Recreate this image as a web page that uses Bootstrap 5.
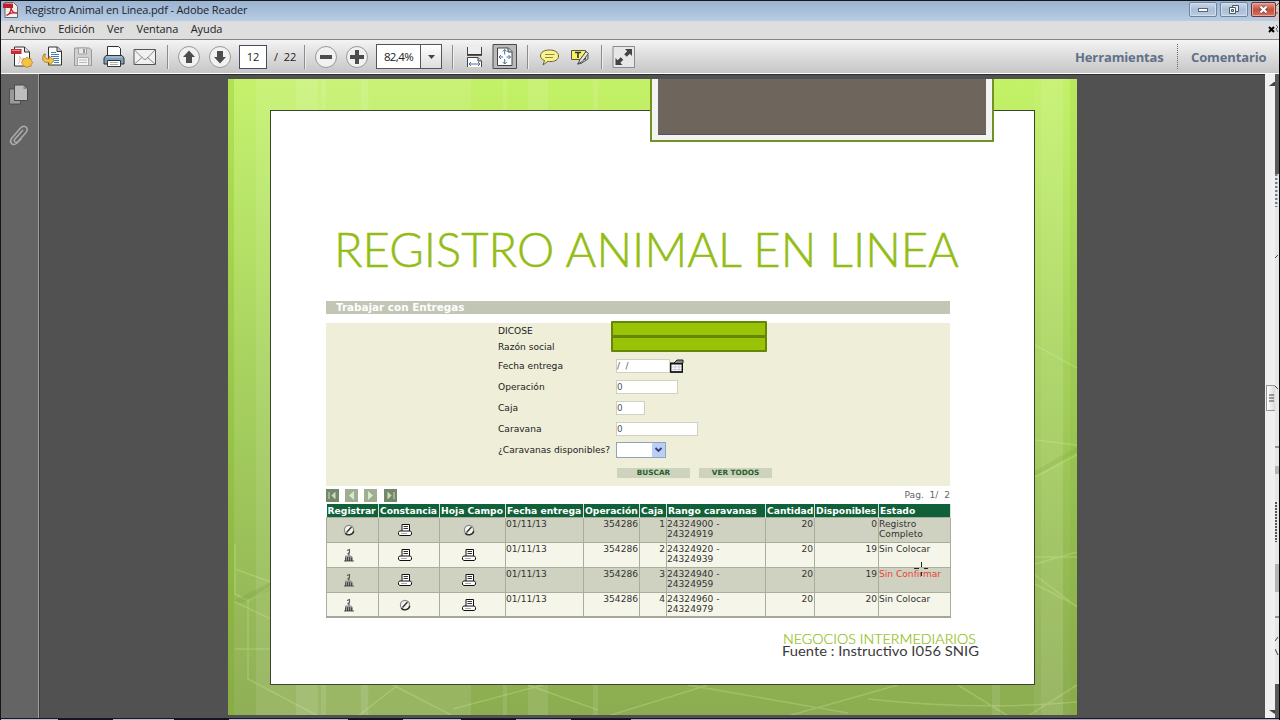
<!DOCTYPE html>
<html lang="es">
<head>
  <meta charset="UTF-8">
  <title>Registro Animal en Linea.pdf - Adobe Reader</title>
  <link href="https://cdn.jsdelivr.net/npm/bootstrap@5.3.0/dist/css/bootstrap.min.css" rel="stylesheet">
  <style>
    body { width: 1280px; height: 720px; overflow: hidden; background: #000; font-family: "Open Sans", "Noto Sans", sans-serif; color: #222; }
    svg { display: block; flex: none; }
    .app-window { width: 1279px; height: 720px; padding-left: 1px; background: #14161c; }

    .title-bar { height: 20px; margin-top: 1px; padding-left: 2px; background: linear-gradient(#9bb4cf, #a9c0da 50%, #b9cde5); font-size: 11px; line-height: 18px; color: #1a2330; }
    .title-bar .doc-name { margin-left: 6px; letter-spacing: -.14px; }
    .win-btn { width: 28px; height: 15px; margin-right: 3px; margin-top: 1px; border: 1px solid #70859d; border-radius: 2px; background: linear-gradient(#cbd9e9, #a9bfd8 50%, #b9cde3); box-shadow: inset 0 0 0 1px #d0deed; }
    .win-close { width: 25px; margin-right: 0; border-color: #6b3434; background: linear-gradient(#dd9d92, #c6503c 50%, #d2705c); box-shadow: inset 0 0 0 1px #e2aaa0; }

    .menu-strip { height: 19px; background: #dedede; border-bottom: 1px solid #858585; padding-left: 7px; font-size: 11px; line-height: 16px; letter-spacing: -.08px; }
    .menu-strip span { margin-right: 12.4px; }
    .tool-strip { height: 34px; padding: 1px 0 0 9px; background: linear-gradient(#f4f4f4, #dcdcdc 50%, #c6c6c6); border-bottom: 1px solid #fff; }
    .tool-sep { width: 2px; height: 24px; border-left: 1px solid #8c8c8c; background: #eee; flex: none; }
    .page-box { width: 28px; height: 24px; border: 1px solid #444d66; background: #fff; font-size: 11px; flex: none; }
    .page-total { font-size: 11px; margin-left: 7px; width: 30px; white-space: pre; }
    .zoom-box { width: 66px; height: 25px; border: 1px solid #555; background: #fff; font-size: 11.5px; letter-spacing: -.6px; flex: none; }
    .zoom-box .drop { width: 21px; border-left: 1px solid #555; background: linear-gradient(#fff, #dedede); }
    .pane-link { font-size: 13px; font-weight: 700; color: #5f7188; letter-spacing: -.13px; line-height: 20px; }

    .side-rail { width: 39px; background: #646464; border-right: 1px solid #3b3b3b; box-shadow: inset -1px 0 #a0a0a0; padding: 10px 0 0 7px; flex: none; }
    .doc-area { width: 1225px; background: #515151; border-top: 1px solid #2d2d2d; padding: 4px 0 0 188px; flex: none; }
    .scroll-rail { width: 10px; background: #f0f0f0; flex: none; }
    .scroll-thumb { width: 9px; height: 26px; border: 1px solid #999; border-right: 0; background: linear-gradient(90deg, #fff, #d8d8d8); }
    .bottom-line { height: 2px; background: linear-gradient(90deg, #b9bbc8 57px, #14161c 57px 112px, #b9bbc8 112px 173px, #14161c 173px 228px, #b9bbc8 228px 347px, #14161c 347px 402px, #b9bbc8 402px 460px, #14161c 460px 515px, #aab 515px 570px, #14161c 570px 630px, #aab 630px 1274px); border-top: 1px solid #17172c; }

    .slide { width: 849px; height: 636px; padding: 31px 42px; }
    .slide-paper { position: relative; width: 765px; height: 575px; background: #fff; border: 1px solid #39452c; padding: 105px 0 0 55px; }
    .slide-tab { position: absolute; top: 0; left: 422px; width: 344px; height: 63px; border: 2px solid #739124; border-top: 0; background: #f3f3f1; padding: 0 6px 5px; }
    .slide-tab div { height: 100%; background: #6e665c; border-bottom: 1px solid #555; }

    .snig { width: 624px; font-family: "DejaVu Sans", sans-serif; font-size: 9.1px; color: #333; }
    .snig-head { height: 13px; margin-top: 17px; background: #c1c6b5; color: #fff; font-weight: 700; font-size: 10.4px; line-height: 13px; padding-left: 10px; }
    .snig-form { position: relative; height: 163px; margin-top: 9px; background: #eeeed9; padding-left: 172px; }
    .form-line { display: flex; align-items: center; height: 21px; }
    .form-line label { width: 118px; white-space: nowrap; color: #222; font-size: 9.1px; }
    .snig-input { height: 14px; border: 1px solid #cfcfc3; background: #fff; color: #555; font-size: 8.8px; line-height: 12px; }
    .snig-select { width: 50px; height: 16px; border: 1px solid #8fa4b6; background: #fff; }
    .snig-btn { width: 73px; height: 10px; background: #cdd3bd; color: #285f2c; font-weight: 700; font-size: 7.3px; line-height: 10px; text-align: center; }
    .redact { position: absolute; left: 285px; width: 156px; height: 16px; background: #98c307; border: 2px solid #668608; border-radius: 1px; }
    .pager { height: 18px; padding-top: 3px; }
    .pager svg { margin-right: 6px; }

    .snig-table { width: 624px; table-layout: fixed; border-collapse: collapse; border-bottom: 2px solid #a5a898; line-height: 10px; }
    .snig-table th { height: 13px; padding: 1px 0 0 1px; background: #10603a; color: #fff; font-size: 9.2px; line-height: 12px; white-space: nowrap; border-right: 1px solid #d9e2d4; }
    .snig-table td { height: 25px; padding: 1px 1px 0 0; vertical-align: top; border: 1px solid #a9ad9b; border-width: 1px 1px 0; }
    .snig-table tbody tr:nth-child(odd) { background: #cfd2c1; }
    .snig-table tbody tr:nth-child(even) { background: #f5f6e9; }
    .snig-table td.icon { padding: 5px 8px 0 0; }
    .snig-table td.icon svg { margin: 0 auto; }
    .snig-table td.num { text-align: right; }
    .snig-table td.warn { color: #e8423a; }
    .slide-foot { margin: 12px 0 0 455px; }
    .cursor { position: absolute; left: 643px; top: 451px; }
  </style>
</head>
<body>
  <!-- shared icons -->
  <svg width="0" height="0" class="position-absolute">
    <symbol id="ico-none" viewBox="0 0 14 14">
      <circle cx="7" cy="7" r="4.6" fill="#f4f4ee" stroke="#888" stroke-width="1.2"/>
      <path d="M3.2 10.2A5 5 0 0 0 11.8 8M4.500 9.500 9.500 4" fill="none" stroke="#2b2b2b" stroke-width="1.3"/>
    </symbol>
    <symbol id="ico-print" viewBox="0 0 16 14">
      <path d="M5 8V1.5h7.5V8" fill="#fff" stroke="#111"/>
      <path d="M6.5 3.5h4.5M6.5 5.5h4.5" stroke="#333"/>
      <path d="M2.5 8h11l1 1.5v2l-1.5 1H3l-1.5-1v-2z" fill="#fff" stroke="#111"/>
      <path d="M4 10.5h6" stroke="#aaa"/>
    </symbol>
    <symbol id="ico-reg" viewBox="0 0 12 14">
      <path d="M4 2.5 6.5 1.5v3L4.500 6M6 5v3" fill="none" stroke="#555" stroke-width="1.1"/>
      <path d="M2 7.500h6l2 2V13H2z" fill="#999"/>
      <path d="M2.500 13V9.500M4.500 13V9M6.500 13V9M8.500 13V9.500M1 13h10" stroke="#333" stroke-width=".8"/>
    </symbol>
  </svg>

  <div class="app-window d-flex flex-column">
    <div class="title-bar d-flex">
      <svg width="16" height="18" viewBox="0 0 16 18">
        <path d="M2 1.500h8.500l4 4V16.500H2z" fill="#f5f0ee" stroke="#666"/>
        <path d="M0 2.500h10v4.500H0z" fill="#c11e2b"/>
        <path d="M3.500 14.500c3-1 5-5 4.500-8 .5 4 3 6 6 5.500-4-.8-8 .5-10.500 2.500z" fill="none" stroke="#c11e2b" stroke-width="1.300"/>
      </svg>
      <span class="doc-name">Registro Animal en Linea.pdf - Adobe Reader</span>
      <div class="win-btn d-flex align-items-center justify-content-center ms-auto">
        <svg width="12" height="6"><rect x="1.500" y="1.500" width="9" height="3" fill="#fff" stroke="#5a6574"/></svg>
      </div>
      <div class="win-btn d-flex align-items-center justify-content-center">
        <svg width="12" height="11"><path d="M4.500 1.500h6v6h-6z" fill="#e8eef5" stroke="#4c5766"/><path d="M1.500 3.500h6v6h-6z" fill="#fff" stroke="#4c5766"/><path d="M3.500 5.500h2v2h-2z" fill="#aabdd2" stroke="#4c5766"/></svg>
      </div>
      <div class="win-btn win-close d-flex align-items-center justify-content-center">
        <svg width="11" height="9"><path d="m2.500 1.500 6 6M8.500 1.500l-6 6" stroke="#6b403a" stroke-width="3.600"/><path d="m2.500 1.500 6 6M8.500 1.500l-6 6" stroke="#fff" stroke-width="2.300"/></svg>
      </div>
      <svg width="3" height="19"><path d="M0 0h3v19H0z" fill="#d8c4c0"/><path d="M0 5l3-3M0 12h2" stroke="#555"/></svg>
    </div>

    <div class="menu-strip d-flex">
      <span>Archivo</span><span>Edición</span><span>Ver</span><span>Ventana</span><span>Ayuda</span>
      <svg class="ms-auto" width="12" height="18"><path d="m2 6 5 5M7 6l-5 5" stroke="#000" stroke-width="2"/><path d="M9 4l2 2-2 2 2 3" fill="none" stroke="#667"/></svg>
    </div>

    <div class="tool-strip d-flex align-items-center">
      <!-- create pdf, open, save, print, mail -->
      <svg width="24" height="24" viewBox="0 0 24 24">
        <path d="M4.500 2h10l5 5v14h-15z" fill="#fcfcfc" stroke="#333"/><path d="M14.500 2v5h5" fill="#ddd" stroke="#333"/>
        <path d="M1 4h10.500v5H1z" fill="#c72c3b"/><path d="M2 5.500h8" stroke="#e98690"/>
        <path d="M8 19c2-2 2-5 1.500-8 1 3 3 5 5 5" fill="none" stroke="#e4b8b8"/>
        <path d="m17 12 1.600 1.800 2.400-.2.200 2.400 1.800 1.500-1.800 1.500-.2 2.400-2.400-.2L17 23l-1.600-1.800-2.400.2-.2-2.400-1.800-1.500 1.800-1.500.2-2.400 2.400.2z" fill="#f6c443" stroke="#b47a1b" stroke-width=".7"/>
      </svg>
      <svg style="margin-left: 7px" width="24" height="24" viewBox="0 0 24 24">
        <path d="M7.500 2h9l4 4v14h-13z" fill="#fff" stroke="#333"/><path d="M16 2v4.500h4.500" fill="#ccc" stroke="#333"/>
        <path d="M10 7.500h5M10 9.500h8M10 11.500h8M12 13.500h6M13 15.500h5M13 17.500h5" stroke="#3b83b5"/>
        <path d="M3 9c-3 5-1 9 5 8.500v3l5.500-5-5.500-4.500v2.800C4.500 14.500 3 12 4.500 9z" fill="#f3c14a" stroke="#a2731f" stroke-width=".8"/>
      </svg>
      <svg class="ms-2" width="20" height="24" viewBox="0 0 20 24">
        <path d="M1.500 3h15l2 2v15.500h-17z" fill="#d0d0d0" stroke="#999"/><path d="M5.500 3h8v6h-8z" fill="#e9e9e9" stroke="#a2a2a2"/><path d="M10 4h2v4h-2z" fill="#999"/><path d="M4.500 12.500h11v8h-11z" fill="#f3f3f3" stroke="#aaa"/><path d="M6 15h8M6 17.500h8" stroke="#bbb"/>
      </svg>
      <svg style="margin-left: 10px" width="22" height="24" viewBox="0 0 22 24">
        <path d="M4.500 11V1.500h11l2 2V11" fill="#fff" stroke="#333"/>
        <path d="M3 10.500h16l2 2.500v6H1v-6z" fill="#7d9fbd" stroke="#333"/><path d="M3 12h16" stroke="#bdd0e0"/>
        <path d="M4.500 15.500h13v6h-13z" fill="#fff" stroke="#333"/><path d="M7 17.500h8M7 19.500h8" stroke="#aaa"/>
      </svg>
      <svg style="margin-left: 8px" width="24" height="24" viewBox="0 0 24 24">
        <path d="M1 4.500h21.500v15H1z" fill="#f1f1f1" stroke="#555"/><path d="m1.500 5 8.500 8.500q2 2 4 0L22 5M1.500 19l8-7M22 19l-8-7" fill="none" stroke="#8a8a8a"/>
      </svg>
      <div class="tool-sep" style="margin-left: 10px"></div>
      <svg style="margin-left: 8px" width="24" height="24" viewBox="0 0 24 24"><circle cx="12" cy="12" r="10.500" fill="#f1f1f1" stroke="#999"/><path d="m12 5.500 6 6.500h-3v6H9v-6H6z" fill="#4d4d4d"/></svg>
      <svg style="margin-left: 7px" width="24" height="24" viewBox="0 0 24 24"><circle cx="12" cy="12" r="10.500" fill="#f1f1f1" stroke="#999"/><path d="m12 18.500 6-6.500h-3V6H9v6H6z" fill="#4d4d4d"/></svg>
      <div class="page-box d-flex align-items-center justify-content-center" style="margin-left: 7px">12</div>
      <span class="page-total">/  22</span>
      <div class="tool-sep"></div>
      <svg style="margin-left: 8px" width="24" height="24" viewBox="0 0 24 24"><circle cx="12" cy="12" r="10.500" fill="#f1f1f1" stroke="#999"/><path d="M6 10h12v4H6z" fill="#4d4d4d"/></svg>
      <svg style="margin-left: 7px" width="24" height="24" viewBox="0 0 24 24"><circle cx="12" cy="12" r="10.500" fill="#f1f1f1" stroke="#999"/><path d="M10 5h4v5h5v4h-5v5h-4v-5H5v-4h5z" fill="#4d4d4d"/></svg>
      <div class="zoom-box d-flex" style="margin-left: 7px">
        <div class="flex-grow-1 d-flex align-items-center justify-content-center">82,4%</div>
        <div class="drop d-flex align-items-center justify-content-center"><svg width="7" height="4"><path d="M0 0h7L3.500 4z" fill="#444"/></svg></div>
      </div>
      <div class="tool-sep" style="margin-left: 10px"></div>
      <svg style="margin-left: 12px" width="18" height="24" viewBox="0 0 18 24">
        <path d="M1.500 2v7.500h14V2" fill="#eee" stroke="#444"/><path d="M1 10h15" stroke="#333" stroke-width="1.600"/>
        <path d="M1.500 22v-9.500h10.500l3.500 3.500v6" fill="#fff" stroke="#444"/><path d="M12 12.500V16h3.500" fill="#ccc" stroke="#444"/><path d="M3 19h11M5 17l-2 2 2 2M12 17l2 2-2 2" fill="none" stroke="#4d7296"/>
      </svg>
      <svg style="margin-left: 8px" width="26" height="25" viewBox="0 0 26 25">
        <path d="M1 .5h23.500v24H1z" fill="#bababa" stroke="#4c4c4c"/><path d="M5.500 4h11l3.500 3.500V21.500H5.500z" fill="#fff" stroke="#444"/><path d="M16 4v4h4" fill="#ccc" stroke="#444"/>
        <path d="M12.700 5.500v5M10.700 7.500l2-2 2 2M12.700 20v-5M10.700 18l2 2 2-2M7 13h4M9 11l-2 2 2 2M18.500 13h-4M16.500 11l2 2-2 2" fill="none" stroke="#4d7296"/>
      </svg>
      <div class="tool-sep" style="margin-left: 9px"></div>
      <svg style="margin-left: 10px" width="22" height="24" viewBox="0 0 22 24">
        <path d="M10.500 5c5 0 9 2 9 6s-4 5.500-7.500 5.500c-1 0-2 0-3-.2L4 20l1.500-4.500C3 14.500 1.500 13 1.500 11c0-4 4-6 9-6z" fill="#fbf48e" stroke="#6b6335"/><path d="M6 9.500h9.500M6 12.500h8" stroke="#8f8848"/>
      </svg>
      <svg style="margin-left: 9px" width="22" height="24" viewBox="0 0 22 24">
        <path d="M1.500 5.500h14v9h-14z" fill="#fbf35a" stroke="#555"/><path d="M5 7.500h6M8 7.500V13" stroke="#333" stroke-width="1.600"/>
        <path d="m8 19 2-4.500 6-8 2.500 2-6.200 8z" fill="#e6e6e6" stroke="#444"/><path d="M18 10v4l-7 4.500-4 .5" fill="none" stroke="#555"/>
      </svg>
      <div class="tool-sep" style="margin-left: 9px"></div>
      <svg style="margin-left: 9px" width="24" height="24" viewBox="0 0 24 24">
        <path d="M1 1.500h21.500v21H1z" fill="#e7e7e7" stroke="#8b8b8b"/><path d="M13 4h7v7l-2.200-2.200-3 3-2.600-2.600 3-3zM3.500 20v-7l2.200 2.200 3-3 2.600 2.600-3 3 2.200 2.200z" fill="#444"/>
      </svg>
      <span class="pane-link" style="margin-left: 439px; width: 102px">Herramientas</span>
      <svg width="2" height="26"><path d="M.500 0v26" stroke="#666" stroke-dasharray="1 1"/></svg>
      <span class="pane-link" style="margin-left: 12px; width: 83px">Comentario</span>
    </div>

    <div class="d-flex flex-grow-1" style="min-height: 0">
      <div class="side-rail">
        <svg width="22" height="22" viewBox="0 0 22 22"><path d="M1.500 5h11v15h-11z" fill="#9a9a9a" stroke="#3d3d3d" stroke-width=".7"/><path d="M6.500 1H16l3.500 3.500V16.500h-13z" fill="#bdbdbd" stroke="#4a4a4a"/><path d="M15.500 1v4h4" fill="#888"/></svg>
        <svg class="mt-3" width="22" height="26" viewBox="0 0 22 26"><path d="m15 8-8 9q-1.500 2 0 3t3-.5l8-9q2.500-3.500 0-5.500t-5.500 1l-9 10.500q-2 3 0 5t5 0l5-5" fill="none" stroke="#adadad" stroke-width="1.500"/></svg>
      </div>

      <div class="doc-area">
        <div class="slide position-relative">
          <svg class="position-absolute top-0 start-0" width="849" height="636">
            <defs><linearGradient id="leaf" x1="0" y1="0" x2="0" y2="1"><stop offset="0" stop-color="#c3f167"/><stop offset=".12" stop-color="#bbea65"/><stop offset=".4" stop-color="#a8d55b"/><stop offset=".7" stop-color="#98c054"/><stop offset="1" stop-color="#8cac51"/></linearGradient></defs>
            <path d="M0 0h849v636H0z" fill="url(#leaf)"/>
            <path d="M0 0h6v636H0z" fill="#7fae10" opacity=".22"/>
            <path d="M6 0h22v636H6z" fill="#fff" opacity=".04"/>
            <path d="M28 0h115v636H28z" fill="#fff" opacity=".12"/>
            <path d="M68 0h22v636H68zM93 0h5v636h-5zM133 0h7v636h-7z" fill="#fff" opacity=".1"/>
            <path d="M143 0h100v636H143z" fill="#fff" opacity=".1"/>
            <path d="M275 0h4v636h-4zM300 0h20v636h-20zM365 0h5v636h-5z" fill="#fff" opacity=".1"/>
            <path d="M764 31h8v605h-8z" fill="#fff" opacity=".1"/>
            <path d="M813 0h22v636H813z" fill="#fff" opacity=".12"/><path d="M806 0h7v636h-7z" fill="#fff" opacity=".06"/>
            <path d="M842 0h7v636h-7z" fill="#6fa020" opacity=".1"/>
            <g fill="none" stroke="#dcf3a9" stroke-width="1.500" opacity=".25">
              <path d="M7 490l36 13M7 523l36 17M7 570h36M20 520v80l70 37M43 508 20 522 7 515V465M130 637l40-31M165 606l60 31M225 630l90-24M300 606l70 25M380 637l100-31M460 606l160 28M560 637l110-31"/>
              <path d="M807 266l42 23M807 361l42 5M807 398l42-22M807 478h42M807 485l42-12M807 496l42 32M807 505l42 22M730 606l50 31M640 620q110 12 209 3M800 637l49-31"/>
            </g>
            <path d="M807 397l42-24v-5l-42 24z" fill="#78a02e" opacity=".2"/><path d="M7 521l36-18v8l-32 14z" fill="#6b9430" opacity=".2"/>
          </svg>

          <div class="slide-paper">
            <svg width="660" height="68"><text x="8" y="51" textLength="625" lengthAdjust="spacingAndGlyphs" font-family="Lato, sans-serif" font-weight="300" font-size="47.500" fill="#93bd15" stroke="#93bd15" stroke-width=".500">REGISTRO ANIMAL EN LINEA</text></svg>
            <div class="snig">
              <div class="snig-head">Trabajar con Entregas</div>
              <div class="snig-form">
                <div class="form-line" style="height: 17px"><label>DICOSE</label></div>
                <div class="form-line" style="height: 16px"><label>Razón social</label></div>
                <div class="form-line"><label>Fecha entrega</label><div class="snig-input" style="width: 54px">/ &nbsp;/</div>
                  <svg width="14" height="14" viewBox="0 0 14 14"><path d="M.500 4.500h12v8.500H.500z" fill="#fff" stroke="#111"/><path d="M0 4.500h13" stroke="#111" stroke-width="2"/><path d="m4 4 3-3h6v3" fill="#888" stroke="#222"/><path d="M2 8h10M2 10.500h10M5 6v6M9 6v6" stroke="#ccd"/><path d="M0 13h13M.700 4v9M12.300 4v9" stroke="#111" stroke-width="1.400"/></svg>
                </div>
                <div class="form-line"><label>Operación</label><div class="snig-input" style="width: 62px">0</div></div>
                <div class="form-line"><label>Caja</label><div class="snig-input" style="width: 29px">0</div></div>
                <div class="form-line"><label>Caravana</label><div class="snig-input" style="width: 82px">0</div></div>
                <div class="form-line"><label>¿Caravanas disponibles?</label>
                  <div class="snig-select d-flex justify-content-end"><svg width="13" height="14"><rect width="13" height="14" rx="1" fill="#bccdf6"/><path d="m3.500 5 3 3 3-3" fill="none" stroke="#2d4170" stroke-width="1.800"/></svg></div>
                </div>
                <div class="d-flex" style="margin: 7px 0 0 119px; gap: 9px"><div class="snig-btn">BUSCAR</div><div class="snig-btn">VER TODOS</div></div>
                <div class="redact" style="top: -2px"></div>
                <div class="redact" style="top: 13px"></div>
              </div>
              <div class="pager d-flex">
                <svg width="13" height="13"><path d="M0 0h13v13H0z" fill="#74886a"/><path d="M3 3v7M9 3.500 6 6.500l3 3z" fill="#cfdcc0" stroke="#cfdcc0"/></svg>
                <svg width="13" height="13"><path d="M0 0h13v13H0z" fill="#9fad93"/><path d="M9 2 4 6.500 9 11z" fill="#dce8cc"/></svg>
                <svg width="13" height="13"><path d="M0 0h13v13H0z" fill="#9fad93"/><path d="m4 2 5 4.500L4 11z" fill="#dce8cc"/></svg>
                <svg width="13" height="13" style="margin-left: 1px"><path d="M0 0h13v13H0z" fill="#74886a"/><path d="M10 3v7M4 3.500l3 3-3 3z" fill="#cfdcc0" stroke="#cfdcc0"/></svg>
                <span class="ms-auto" style="color: #666; line-height: 13px">Pag. &nbsp;1/ &nbsp;2</span>
              </div>
              <table class="snig-table">
                <colgroup><col style="width: 52px"><col style="width: 61px"><col style="width: 66px"><col style="width: 78px"><col style="width: 56px"><col style="width: 27px"><col style="width: 99px"><col style="width: 49px"><col style="width: 64px"><col style="width: 72px"></colgroup>
                <thead><tr><th>Registrar</th><th>Constancia</th><th>Hoja Campo</th><th>Fecha entrega</th><th>Operación</th><th>Caja</th><th>Rango caravanas</th><th>Cantidad</th><th>Disponibles</th><th>Estado</th></tr></thead>
                <tbody id="entregas"></tbody>
              </table>
            </div>
            <div class="slide-foot">
              <svg width="210" height="36">
                <text x="2" y="14" textLength="193" lengthAdjust="spacingAndGlyphs" font-family="Lato, sans-serif" font-weight="300" font-size="14.500" fill="#93bd15" stroke="#93bd15" stroke-width=".200">NEGOCIOS INTERMEDIARIOS</text>
                <text x="1" y="26" textLength="197" lengthAdjust="spacingAndGlyphs" font-family="Lato, sans-serif" font-size="14" fill="#3a3a3a">Fuente : Instructivo I056 SNIG</text>
              </svg>
            </div>
            <svg class="cursor" width="15" height="15"><path d="M7.500 0v5M7.500 10v4M0 6.500h5M10 6.500h4" stroke="#222"/></svg>
          </div>
          <div class="slide-tab"><div></div></div>
        </div>
      </div>

      <div class="scroll-rail d-flex flex-column align-items-end">
        <svg width="6" height="4" style="margin-top: 8px"><path d="M0 4 5 0h1v4z" fill="#444"/></svg>
        <div class="scroll-thumb d-flex align-items-center justify-content-center" style="margin-top: 299px"><svg width="5" height="8"><path d="M0 1h5M0 4h5M0 7h5" stroke="#444"/></svg></div>
        <svg width="6" height="4" class="mt-auto mb-1"><path d="M0 0h6v4z" fill="#444"/></svg>
      </div>
      <!-- sliver of the window behind -->
      <svg width="4" height="645"><path d="M0 0h4v645H0z" fill="#e6e6e6"/><path d="M0 0h4v100H0zM0 610h4v35H0z" fill="#595959"/><path d="M0 392h4v8H0zM0 490h4v28H0z" fill="#b5b5b5"/><path d="M1 428v40" stroke="#555" stroke-width="2" stroke-dasharray="2 1"/><path d="M1 100v33" stroke="#6d809b" stroke-width="3" stroke-dasharray="2 2"/><path d="M0 184l3-3M0 312l3 3M0 373h4M0 543h4M0 567l3-4M0 575l3 6" stroke="#444"/></svg>
    </div>
    <div class="bottom-line"></div>
  </div>

  <script>
    const rows = [
      ['none', 'print', 'none', '1', '24324900', '24324919', '0', 'Registro Completo', ''],
      ['reg', 'print', 'print', '2', '24324920', '24324939', '19', 'Sin Colocar', ''],
      ['reg', 'print', 'print', '3', '24324940', '24324959', '19', 'Sin Confirmar', 'warn'],
      ['reg', 'none', 'print', '4', '24324960', '24324979', '20', 'Sin Colocar', '']
    ];
    const icon = name => `<td class="icon"><svg width="${name == 'print' ? 16 : 14}" height="14"><use href="#ico-${name}"/></svg></td>`;
    document.getElementById('entregas').innerHTML = rows.map(r => `
      <tr>${icon(r[0])}${icon(r[1])}${icon(r[2])}
        <td>01/11/13</td><td class="num">354286</td><td class="num">${r[3]}</td>
        <td>${r[4]} -<br>${r[5]}</td><td class="num">20</td><td class="num">${r[6]}</td>
        <td class="${r[8]}">${r[7]}</td></tr>`).join('');
  </script>
  <script src="https://cdn.jsdelivr.net/npm/bootstrap@5.3.0/dist/js/bootstrap.bundle.min.js"></script>
</body>
</html>
